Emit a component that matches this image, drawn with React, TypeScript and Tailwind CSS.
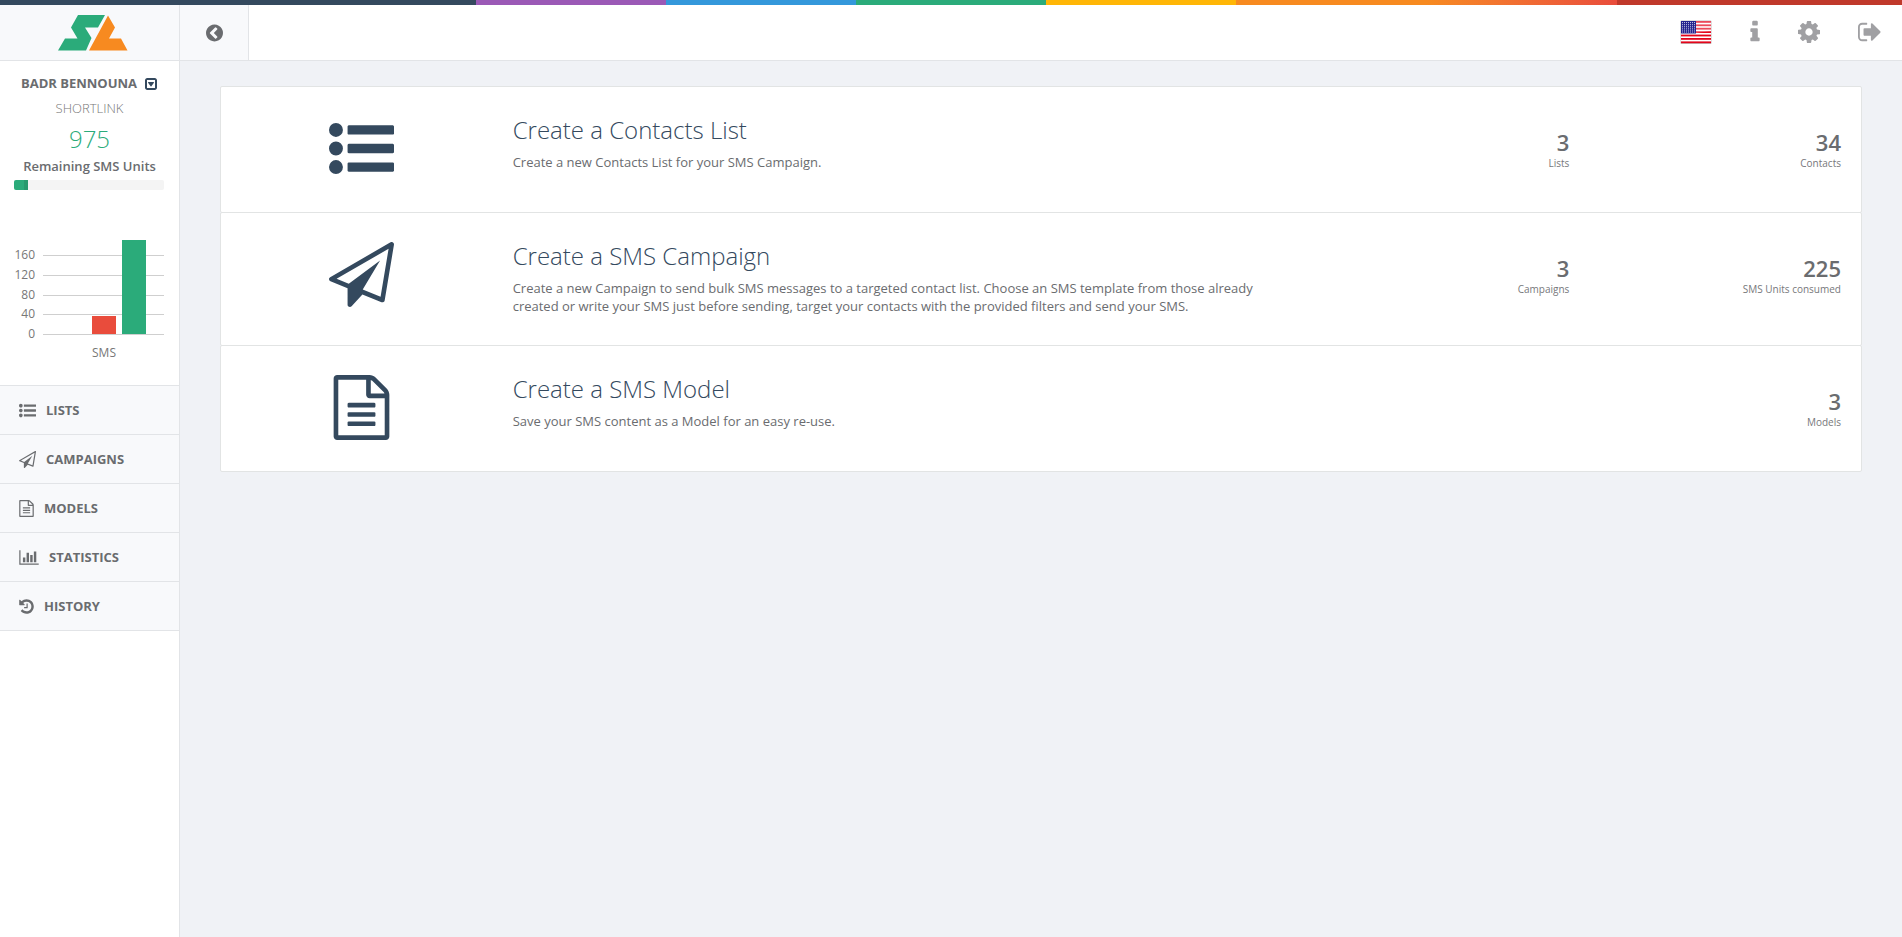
import type { ReactNode } from "react";

type IconProps = { box: string; d: string; className: string };

function Glyph({ box, d, className }: IconProps) {
  return (
    <svg viewBox={box} className={className} fill="currentColor" aria-hidden="true">
      <path d={d} />
    </svg>
  );
}

const LIST =
  "M384 1408q0 80-56 136t-136 56-136-56-56-136 56-136 136-56 136 56 56 136zm0-512q0 80-56 136t-136 56-136-56-56-136 56-136 136-56 136 56 56 136zm1408 416v192q0 13-9.5 22.5t-22.5 9.5h-1216q-13 0-22.5-9.5t-9.5-22.5v-192q0-13 9.5-22.5t22.5-9.5h1216q13 0 22.5 9.5t9.5 22.5zm-1408-928q0 80-56 136t-136 56-136-56-56-136 56-136 136-56 136 56 56 136zm1408 416v192q0 13-9.5 22.5t-22.5 9.5h-1216q-13 0-22.5-9.5t-9.5-22.5v-192q0-13 9.5-22.5t22.5-9.5h1216q13 0 22.5 9.5t9.5 22.5zm0-512v192q0 13-9.5 22.5t-22.5 9.5h-1216q-13 0-22.5-9.5t-9.5-22.5v-192q0-13 9.5-22.5t22.5-9.5h1216q13 0 22.5 9.5t9.5 22.5z";
const PLANE =
  "M1764 11q33 24 27 64l-256 1536q-5 29-32 45-14 8-31 8-11 0-24-5l-527-215-298 327q-18 21-47 21-14 0-23-4-19-7-30-23.5t-11-36.500v-452l-472-193q-37-14-40-55-3-39 32-59l1664-960q35-21 68 2zm-342 1499l221-1323-1434 827 336 137 863-639-478 797z";
const FILE =
  "M1596 380q28 28 48 76t20 88v1152q0 40-28 68t-68 28h-1344q-40 0-68-28t-28-68v-1600q0-40 28-68t68-28h896q40 0 88 20t76 48zm-444-244v376h376q-10-29-22-41l-313-313q-12-12-41-22zm384 1528v-1024h-416q-40 0-68-28t-28-68v-416h-768v1536h1280zm-1024-864q0-14 9-23t23-9h704q14 0 23 9t9 23v64q0 14-9 23t-23 9h-704q-14 0-23-9t-9-23v-64zm736 224q14 0 23 9t9 23v64q0 14-9 23t-23 9h-704q-14 0-23-9t-9-23v-64q0-14 9-23t23-9h704zm0 256q14 0 23 9t9 23v64q0 14-9 23t-23 9h-704q-14 0-23-9t-9-23v-64q0-14 9-23t23-9h704z";
const CHART =
  "M640 896v512h-256v-512h256zm384-512v1024h-256v-1024h256zm1024 1152v128h-2048v-1536h128v1408h1920zm-640-896v768h-256v-768h256zm384-384v1152h-256v-1152h256z";
const HISTORY =
  "M1664 896q0 156-61 298t-164 245-245 164-298 61q-172 0-327-72.5t-264-204.5q-7-10-6.500-22.500t8.500-20.500l137-138q10-9 25-9 16 2 23 12 73 95 179 147t225 52q104 0 198.500-40.500t163.500-109.500 109.500-163.500 40.500-198.500-40.500-198.500-109.500-163.500-163.500-109.500-198.500-40.500q-98 0-188 35.500t-160 101.500l137 138q31 30 14 69-17 40-59 40h-448q-26 0-45-19t-19-45v-448q0-42 40-59 39-17 69 14l130 129q107-101 244.500-156.500t284.500-55.500q156 0 298 61t245 164 164 245 61 298zm-640-288v448q0 14-9 23t-23 9h-320q-14 0-23-9t-9-23v-64q0-14 9-23t23-9h224v-352q0-14 9-23t23-9h64q14 0 23 9t9 23z";
const INFO =
  "M1216 1344v128q0 26-19 45t-45 19h-512q-26 0-45-19t-19-45v-128q0-26 19-45t45-19h64v-384h-64q-26 0-45-19t-19-45v-128q0-26 19-45t45-19h384q26 0 45 19t19 45v576h64q26 0 45 19t19 45zm-128-1152v192q0 26-19 45t-45 19h-256q-26 0-45-19t-19-45v-192q0-26 19-45t45-19h256q26 0 45 19t19 45z";
const COG =
  "M1152 896q0-106-75-181t-181-75-181 75-75 181 75 181 181 75 181-75 75-181zm512-109v222q0 12-8 23t-20 13l-185 28q-19 54-39 91 35 50 107 138 10 12 10 25t-9 23q-27 37-99 108t-94 71q-12 0-26-9l-138-108q-44 23-91 38-16 136-29 186-7 28-36 28h-222q-14 0-24.5-8.5t-11.5-21.5l-28-184q-49-16-90-37l-141 107q-10 9-25 9-14 0-25-11-126-114-165-168-7-10-7-23 0-12 8-23 15-21 51-66.5t54-70.5q-27-50-41-99l-183-27q-13-2-21-12.5t-8-23.5v-222q0-12 8-23t19-13l186-28q14-46 39-92-40-57-107-138-10-12-10-24 0-10 9-23 26-36 98.5-107.500t94.500-71.500q13 0 26 10l138 107q44-23 91-38 16-136 29-186 7-28 36-28h222q14 0 24.500 8.500t11.500 21.500l28 184q49 16 90 37l142-107q9-9 24-9 13 0 25 10 129 119 165 170 7 8 7 22 0 12-8 23-15 21-51 66.500t-54 70.500q26 50 41 98l183 28q13 2 21 12.500t8 23.500z";
const SIGN_OUT =
  "M704 1440q0 4 1 20t.5 26.5-3 23.5-10 19.5-20.5 6.5h-320q-119 0-203.5-84.5t-84.5-203.5v-704q0-119 84.5-203.5t203.5-84.5h320q13 0 22.5 9.5t9.5 22.5q0 4 1 20t.5 26.5-3 23.5-10 19.5-20.5 6.5h-320q-66 0-113 47t-47 113v704q0 66 47 113t113 47h312l11.5 1 11.5 3 8 5.5 7 9 2 13.5zm928-544q0 26-19 45l-544 544q-19 19-45 19t-45-19-19-45v-288h-448q-26 0-45-19t-19-45v-384q0-26 19-45t45-19h448v-288q0-26 19-45t45-19 45 19l544 544q19 19 19 45z";
const CHEVRON =
  "M1037 1395l102-102q19-19 19-45t-19-45l-307-307 307-307q19-19 19-45t-19-45l-102-102q-19-19-45-19t-45 19l-454 454q-19 19-19 45t19 45l454 454q19 19 45 19t45-19zm627-499q0 209-103 385.5t-279.5 279.5-385.5 103-385.5-103-279.5-279.5-103-385.5 103-385.5 279.5-279.5 385.5-103 385.5 103 279.5 279.5 103 385.5z";
const CARET =
  "M1273 675q18 35-5 66l-320 448q-19 27-52 27t-52-27l-320-448q-23-31-5-66 17-35 57-35h640q40 0 57 35zm135 701v-960q0-13-9.5-22.5t-22.5-9.5h-960q-13 0-22.5 9.5t-9.5 22.5v960q0 13 9.5 22.5t22.5 9.5h960q13 0 22.5-9.5t9.5-22.5zm256-960v960q0 119-84.5 203.5t-203.5 84.5h-960q-119 0-203.5-84.5t-84.5-203.5v-960q0-119 84.5-203.5t203.5-84.5h960q119 0 203.5 84.5t84.5 203.5z";

function Logo() {
  return (
    <svg viewBox="0 0 70 36" className="h-9 w-[70px]" role="img" aria-label="Shortlink">
      <path fill="#2bab7a" d="M20 0h27l-7 12.500H27L33.500 23 28 35.500H0L7 23.500h12.500L13 12.500z" />
      <path fill="#f78a20" d="M50 .5l7 12-6 11h12l6.500 12H31z" />
    </svg>
  );
}

function Flag() {
  const stripes = [0, 1, 2, 3, 4, 5, 6];
  const rows = [0, 1, 2, 3, 4, 5];
  const cols = [0, 1, 2, 3, 4, 5, 6];
  return (
    <svg viewBox="0 0 32 24" className="block h-6 w-8" aria-hidden="true">
      <rect x="0.500" y="0.500" width="31" height="23.500" rx="1" fill="#000" opacity="0.25" />
      <rect x="1" y="1" width="30" height="22" fill="#fff" />
      {stripes.map((i) => (
        <rect key={i} x="1" y={1 + i * 3.4} width="30" height="1.800" fill="#e3051b" />
      ))}
      <path d="M1 1h30v10L16 13H1z" fill="#fff" opacity="0.28" />
      <rect x="1" y="1" width="15" height="12.500" fill="#23238e" />
      {rows.map((r) =>
        cols.map((c) => (
          <rect key={`${r}-${c}`} x={2 + c * 2} y={2 + r * 1.9} width="1" height="1" fill="#fff" opacity="0.7" />
        )),
      )}
    </svg>
  );
}

const TICKS = [160, 120, 80, 40, 0];

function UsageChart() {
  return (
    <svg viewBox="0 0 179 150" className="block h-[150px] w-full font-['Open_Sans',sans-serif] text-xs" role="img" aria-label="SMS usage">
      {TICKS.map((t, i) => (
        <g key={t}>
          <text x="35" y={[24, 44, 64, 83, 103][i]} textAnchor="end" fill="#777">
            {t}
          </text>
          <rect x="43" y={[20, 40, 60, 79, 99][i]} width="121" height="1" fill="#cfcfcf" />
        </g>
      ))}
      <rect x="92" y="81" width="24" height="18" fill="#e94c3c" />
      <rect x="122" y="5" width="24" height="94" fill="#2bab7a" />
      <text x="104" y="122" textAnchor="middle" fill="#777">
        SMS
      </text>
    </svg>
  );
}

const NAV = [
  { label: "Lists", box: "0 0 1792 1792", d: LIST, size: "w-[17px]" },
  { label: "Campaigns", box: "0 0 1792 1792", d: PLANE, size: "w-[17px]" },
  { label: "Models", box: "128 0 1536 1792", d: FILE, size: "w-[15px]" },
  { label: "Statistics", box: "0 0 2048 1792", d: CHART, size: "w-5" },
  { label: "History", box: "128 0 1536 1792", d: HISTORY, size: "w-[15px]" },
];

function Sidebar() {
  return (
    <aside className="w-[180px] shrink-0 border-r border-[#e2e4e7] bg-white">
      <a href="#home" className="flex h-14 items-center justify-center border-b border-[#e2e4e7] bg-[#f8f9fb] pl-[6px]">
        <Logo />
      </a>
      <div className="flex flex-col pt-[13px] text-center text-[13px]">
        <button type="button" className="flex h-5 items-center justify-center gap-2 pr-px font-bold uppercase">
          Badr Bennouna
          <Glyph box="128 0 1536 1792" d={CARET} className="h-[14px] w-3 text-[#34495e]" />
        </button>
        <p className="mt-1 h-5 leading-5 font-light text-[#777] uppercase">Shortlink</p>
        <p className="mt-[5px] h-8 text-2xl leading-8 font-light text-[#2bab7a]">975</p>
        <p id="units" className="h-[22px] leading-[22px] font-semibold">Remaining SMS Units</p>
        <div
          role="progressbar"
          aria-labelledby="units"
          aria-valuenow={9}
          className="mt-[3px] mr-[15px] ml-[14px] flex h-[10px] overflow-hidden rounded-[2px] bg-[#f4f4f4]"
        >
          <span className="w-[10px] bg-[#2bab7a]" />
          <span className="w-1 bg-[#279a6e]" />
        </div>
      </div>
      <div className="mt-[45px]">
        <UsageChart />
      </div>
      <nav className="border-t border-[#e2e4e7] bg-[#f8f9fb]">
        {NAV.map((n) => (
          <a
            key={n.label}
            href={`#${n.label.toLowerCase()}`}
            className="flex h-[49px] items-center gap-[10px] border-b border-[#e2e4e7] pt-px pl-[19px] text-[13px] font-bold uppercase"
          >
            <Glyph box={n.box} d={n.d} className={`h-[17px] ${n.size}`} />
            {n.label}
          </a>
        ))}
      </nav>
    </aside>
  );
}

function Header() {
  return (
    <header className="flex h-14 items-center border-b border-[#e2e4e7] bg-white">
      <button
        type="button"
        aria-label="Collapse menu"
        className="flex h-full w-[69px] items-center justify-center border-r border-[#e2e4e7] bg-[#f8f9fb]"
      >
        <Glyph box="128 0 1536 1792" d={CHEVRON} className="h-5 w-[17px]" />
      </button>
      <div className="ml-auto flex items-center gap-[38px] pr-[21px] pb-[2px] text-[#a0a0a3]">
        <button type="button" aria-label="Language: English (US)">
          <Flag />
        </button>
        <a href="#info" aria-label="Information">
          <Glyph box="576 0 640 1792" d={INFO} className="block h-[26px] w-[10px]" />
        </a>
        <a href="#settings" aria-label="Settings">
          <Glyph box="128 0 1536 1792" d={COG} className="block h-[26px] w-[22px]" />
        </a>
        <a href="#logout" aria-label="Sign out">
          <Glyph box="64 0 1600 1792" d={SIGN_OUT} className="block h-[26px] w-[23px]" />
        </a>
      </div>
    </header>
  );
}

function Stat({ value, label }: { value: number; label: string }) {
  return (
    <div className="col-span-2 px-[15px] pt-[14px] text-right">
      <p className="text-[22px] leading-6 font-semibold">{value}</p>
      <p className="text-[10px] leading-[18px] text-[#77787b]">{label}</p>
    </div>
  );
}

type RowProps = { box: string; d: string; title: string; children: ReactNode; stats: ([string, number] | null)[] };

function ActionRow({ box, d, title, children, stats }: RowProps) {
  return (
    <section className="-mt-px grid min-h-[127px] grid-cols-12 rounded-[2px] border border-[#e2e4e4] bg-white px-[5px] pt-[29px] pb-[30px]">
      <div className="col-span-2 flex justify-center">
        <Glyph box={box} d={d} className="h-[65px] w-[65px] text-[#34495e]" />
      </div>
      <div className="col-span-6 px-[15px]">
        <h2 className="text-2xl leading-7 font-light text-[#34495e]">
          <a href="#create">{title}</a>
        </h2>
        <p className="mt-[9px] text-[13px] leading-[18px]">{children}</p>
      </div>
      {stats.map((s, i) => (s ? <Stat key={s[0]} label={s[0]} value={s[1]} /> : <div key={i} className="col-span-2" />))}
    </section>
  );
}

export default function App() {
  return (
    <div className="flex min-h-screen flex-col bg-[#f0f2f6] font-['Open_Sans',sans-serif] text-[#6a6c6f]">
      <div className="flex h-[5px]">
        <div className="w-1/4 bg-[#34495e]" />
        <div className="w-[10%] bg-[#9b59b6]" />
        <div className="w-[10%] bg-[#3498db]" />
        <div className="w-[10%] bg-[#2bab7a]" />
        <div className="w-[10%] bg-[#ffb606]" />
        <div className="w-[10%] bg-[#f78a20]" />
        <div className="w-[10%] bg-linear-to-r from-[#f78a20] to-[#e94c3c]" />
        <div className="w-[15%] bg-[#c0392b]" />
      </div>
      <div className="flex grow">
        <Sidebar />
        <div className="min-w-0 grow">
          <Header />
          <main className="pt-[26px] pr-10 pl-10">
            <ActionRow box="0 0 1792 1792" d={LIST} title="Create a Contacts List" stats={[["Lists", 3], ["Contacts", 34]]}>
              Create a new Contacts List for your SMS Campaign.
            </ActionRow>
            <ActionRow
              box="0 0 1792 1792"
              d={PLANE}
              title="Create a SMS Campaign"
              stats={[["Campaigns", 3], ["SMS Units consumed", 225]]}
            >
              Create a new Campaign to send bulk SMS messages to a targeted contact list. Choose an SMS template from
              those already created or write your SMS just before sending, target your contacts with the provided
              filters and send your SMS.
            </ActionRow>
            <ActionRow box="0 0 1792 1792" d={FILE} title="Create a SMS Model" stats={[null, ["Models", 3]]}>
              Save your SMS content as a Model for an easy re-use.
            </ActionRow>
          </main>
        </div>
      </div>
    </div>
  );
}
